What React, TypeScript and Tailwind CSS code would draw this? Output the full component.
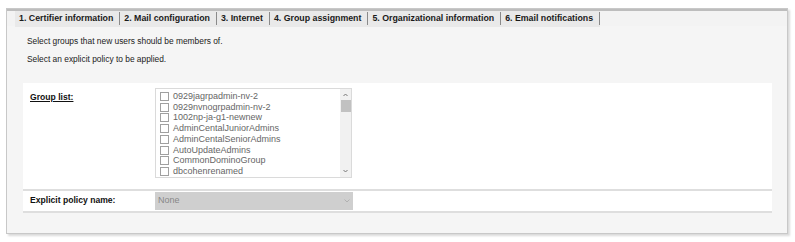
const TABS = [
  '1. Certifier information',
  '2. Mail configuration',
  '3. Internet',
  '4. Group assignment',
  '5. Organizational information',
  '6. Email notifications',
];

const GROUPS = [
  '0929jagrpadmin-nv-2',
  '0929nvnogrpadmin-nv-2',
  '1002np-ja-g1-newnew',
  'AdminCentalJuniorAdmins',
  'AdminCentalSeniorAdmins',
  'AutoUpdateAdmins',
  'CommonDominoGroup',
  'dbcohenrenamed',
];

export default function App() {
  return (
    <div className="h-[242px] w-[795px] bg-white pl-[6px] pt-[8px] font-['Liberation_Sans',Arial,sans-serif]">
      <div className="h-[226px] w-[782px] border border-[#c8c8c8] bg-[#f5f5f5] shadow-[2px_2px_2px_rgba(0,0,0,0.15)]">
        <div className="flex h-[17px] items-center border-t-2 border-[#bdbdbd] bg-[#f3f3f3] pl-[8px]">
          <div className="flex h-[16px] items-center bg-[#e9e9e9]">
            {TABS.map((t) => (
              <div key={t} className="flex h-full items-center">
                <span className="pl-[4px] pr-[6px] text-[8.8px] font-bold leading-none text-[#1a1a1a]">{t}</span>
                <span className="h-[13px] w-px bg-[#8a8a8a]" />
              </div>
            ))}
          </div>
        </div>

        <div className="pl-[20px] pt-[11px] text-[8.4px] leading-none text-[#222]">
          <p>Select groups that new users should be members of.</p>
          <p className="mt-[10px]">Select an explicit policy to be applied.</p>
        </div>

        <div className="mr-[15px] ml-[16px] mt-[19px] bg-white">
          <div className="flex h-[108px] border-b-2 border-[#dedede] pt-[5px]">
            <div className="w-[132px] pl-[7px] pt-[3px] text-[8.6px] font-bold text-[#111] underline">Group list:</div>
            <div className="flex h-[90px] w-[197px] border border-[#dadada] bg-white">
              <div className="flex-1 pl-[4px] pt-[2px]">
                {GROUPS.map((g) => (
                  <div key={g} className="flex h-[10.8px] items-center gap-[4px]">
                    <span className="h-[9px] w-[9px] border border-[#a0a0a0] bg-white" />
                    <span className="text-[9px] leading-none text-[#666]">{g}</span>
                  </div>
                ))}
              </div>
              <div className="flex w-[11px] flex-col items-center bg-[#f1f1f1]">
                <svg className="mt-[4px]" width="5" height="4" viewBox="0 0 5 4"><path d="M0.5 3 L2.5 1 L4.5 3" stroke="#777" fill="none" strokeWidth="1" /></svg>
                <span className="mt-[3px] h-[12px] w-[10px] bg-[#c1c1c1]" />
                <svg className="mt-auto mb-[4px]" width="5" height="4" viewBox="0 0 5 4"><path d="M0.5 1 L2.5 3 L4.5 1" stroke="#777" fill="none" strokeWidth="1" /></svg>
              </div>
            </div>
          </div>
          <div className="flex h-[22px] items-center border-b-2 border-[#dedede]">
            <div className="w-[132px] pl-[7px] text-[8.6px] font-bold text-[#111]">Explicit policy name:</div>
            <div className="flex h-[18px] w-[198px] items-center justify-between bg-[#cfcfcf] px-[3px]">
              <span className="text-[9px] text-[#888]">None</span>
              <svg width="6" height="4" viewBox="0 0 6 4"><path d="M0.5 0.5 L3 3 L5.5 0.5" stroke="#aaa" fill="none" strokeWidth="0.8" /></svg>
            </div>
          </div>
        </div>
      </div>
    </div>
  );
}
